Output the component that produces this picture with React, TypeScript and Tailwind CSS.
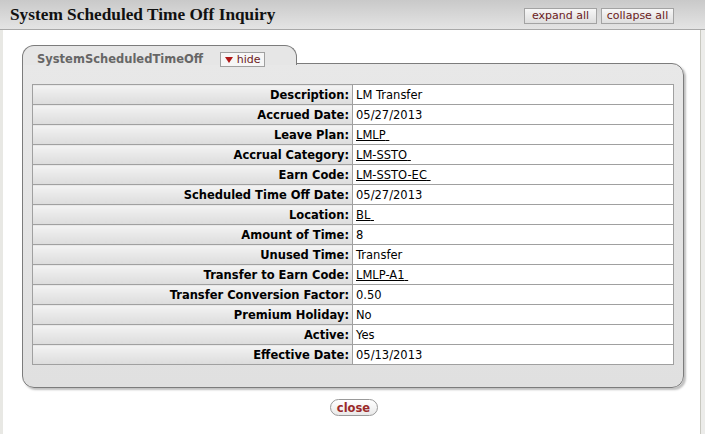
import React from "react";

type Row = { label: string; value: string; link?: boolean };

const rows: Row[] = [
  { label: "Description", value: "LM Transfer" },
  { label: "Accrued Date", value: "05/27/2013" },
  { label: "Leave Plan", value: "LMLP", link: true },
  { label: "Accrual Category", value: "LM-SSTO", link: true },
  { label: "Earn Code", value: "LM-SSTO-EC", link: true },
  { label: "Scheduled Time Off Date", value: "05/27/2013" },
  { label: "Location", value: "BL", link: true },
  { label: "Amount of Time", value: "8" },
  { label: "Unused Time", value: "Transfer" },
  { label: "Transfer to Earn Code", value: "LMLP-A1", link: true },
  { label: "Transfer Conversion Factor", value: "0.50" },
  { label: "Premium Holiday", value: "No" },
  { label: "Active", value: "Yes" },
  { label: "Effective Date", value: "05/13/2013" },
];

function GrayButton({ children }: { children: React.ReactNode }) {
  return (
    <button className="h-[16px] w-[73px] border border-[#a3a3a3] bg-gradient-to-b from-[#f7f7f7] to-[#dedede] text-[11px] leading-[14px] text-[#6b1a1a]">
      {children}
    </button>
  );
}

export default function App() {
  return (
    <div className="flex h-[434px] w-[705px] flex-col bg-white font-['DejaVu_Sans',Verdana,sans-serif] text-[11.5px] text-black">
      <header className="flex h-[30px] shrink-0 items-center justify-between border-b border-[#a8a8a8] bg-gradient-to-b from-[#c9c9c9] to-[#e4e4e4] pl-[10px] pr-[31px]">
        <h1 className="font-['Liberation_Serif',serif] text-[17.3px] font-bold leading-none text-[#111]">
          System Scheduled Time Off Inquiry
        </h1>
        <div className="flex gap-[4px] pt-[3px]">
          <GrayButton>expand all</GrayButton>
          <GrayButton>collapse all</GrayButton>
        </div>
      </header>

      <div className="flex flex-1">
        <div className="w-[3px] bg-[#e8e8e4]" />
        <main className="flex-1 pt-[15px]">
          <section className="ml-[19px] mr-[16px]">
            <div className="relative z-10 -mb-[2px] flex h-[20px] w-[275px] items-start gap-[17px] rounded-t-[12px] border-[1.5px] border-b-0 border-[#7c7c7c] bg-[#e6e6e6] pl-[14px] pt-[6px]">
              <span className="text-[11.5px] font-bold leading-[15px] text-[#666]">
                SystemScheduledTimeOff
              </span>
              <button className="flex h-[15px] w-[45px] items-center justify-center gap-[4px] border border-[#a0a0a0] bg-[#f6f6f6] text-[11px] leading-none text-[#6b1a1a]">
                <svg width="8" height="6" viewBox="0 0 8 6">
                  <path d="M0 0h8L4 6z" fill="#b01818" />
                </svg>
                hide
              </button>
            </div>
            <div className="rounded-[12px] rounded-tl-none border-[1.5px] border-[#7c7c7c] bg-gradient-to-b from-[#e8e8e8] to-[#e0e0e0] px-[9px] pb-[22px] pt-[20px] shadow-[2px_2px_2px_rgba(0,0,0,0.25)]">
              <table className="w-full border-collapse">
                <tbody>
                  {rows.map((r) => (
                    <tr key={r.label} className="h-[20px]">
                      <th className="w-[320px] border border-[#a0a0a0] bg-gradient-to-b from-[#f3f3f3] to-[#dcdcdc] pr-[3px] text-right text-[11.5px] font-bold leading-[18px] text-black">
                        {r.label}:
                      </th>
                      <td className="border border-[#a0a0a0] bg-white pl-[3px] text-[11.5px] leading-[18px]">
                        {r.link ? (
                          <span className="underline">{r.value}&nbsp;</span>
                        ) : (
                          r.value
                        )}
                      </td>
                    </tr>
                  ))}
                </tbody>
              </table>
            </div>
          </section>
          <div className="flex justify-center pl-[4px] pt-[11px]">
            <button className="h-[17px] w-[48px] rounded-full border border-[#9a9a9a] bg-gradient-to-b from-white to-[#e9e9e9] text-[11.5px] font-bold leading-[14px] text-[#9b2a2a]">
              close
            </button>
          </div>
        </main>
        <div className="w-[5px] border-l border-[#c8c8c0] bg-[#ececea]" />
      </div>
    </div>
  );
}
